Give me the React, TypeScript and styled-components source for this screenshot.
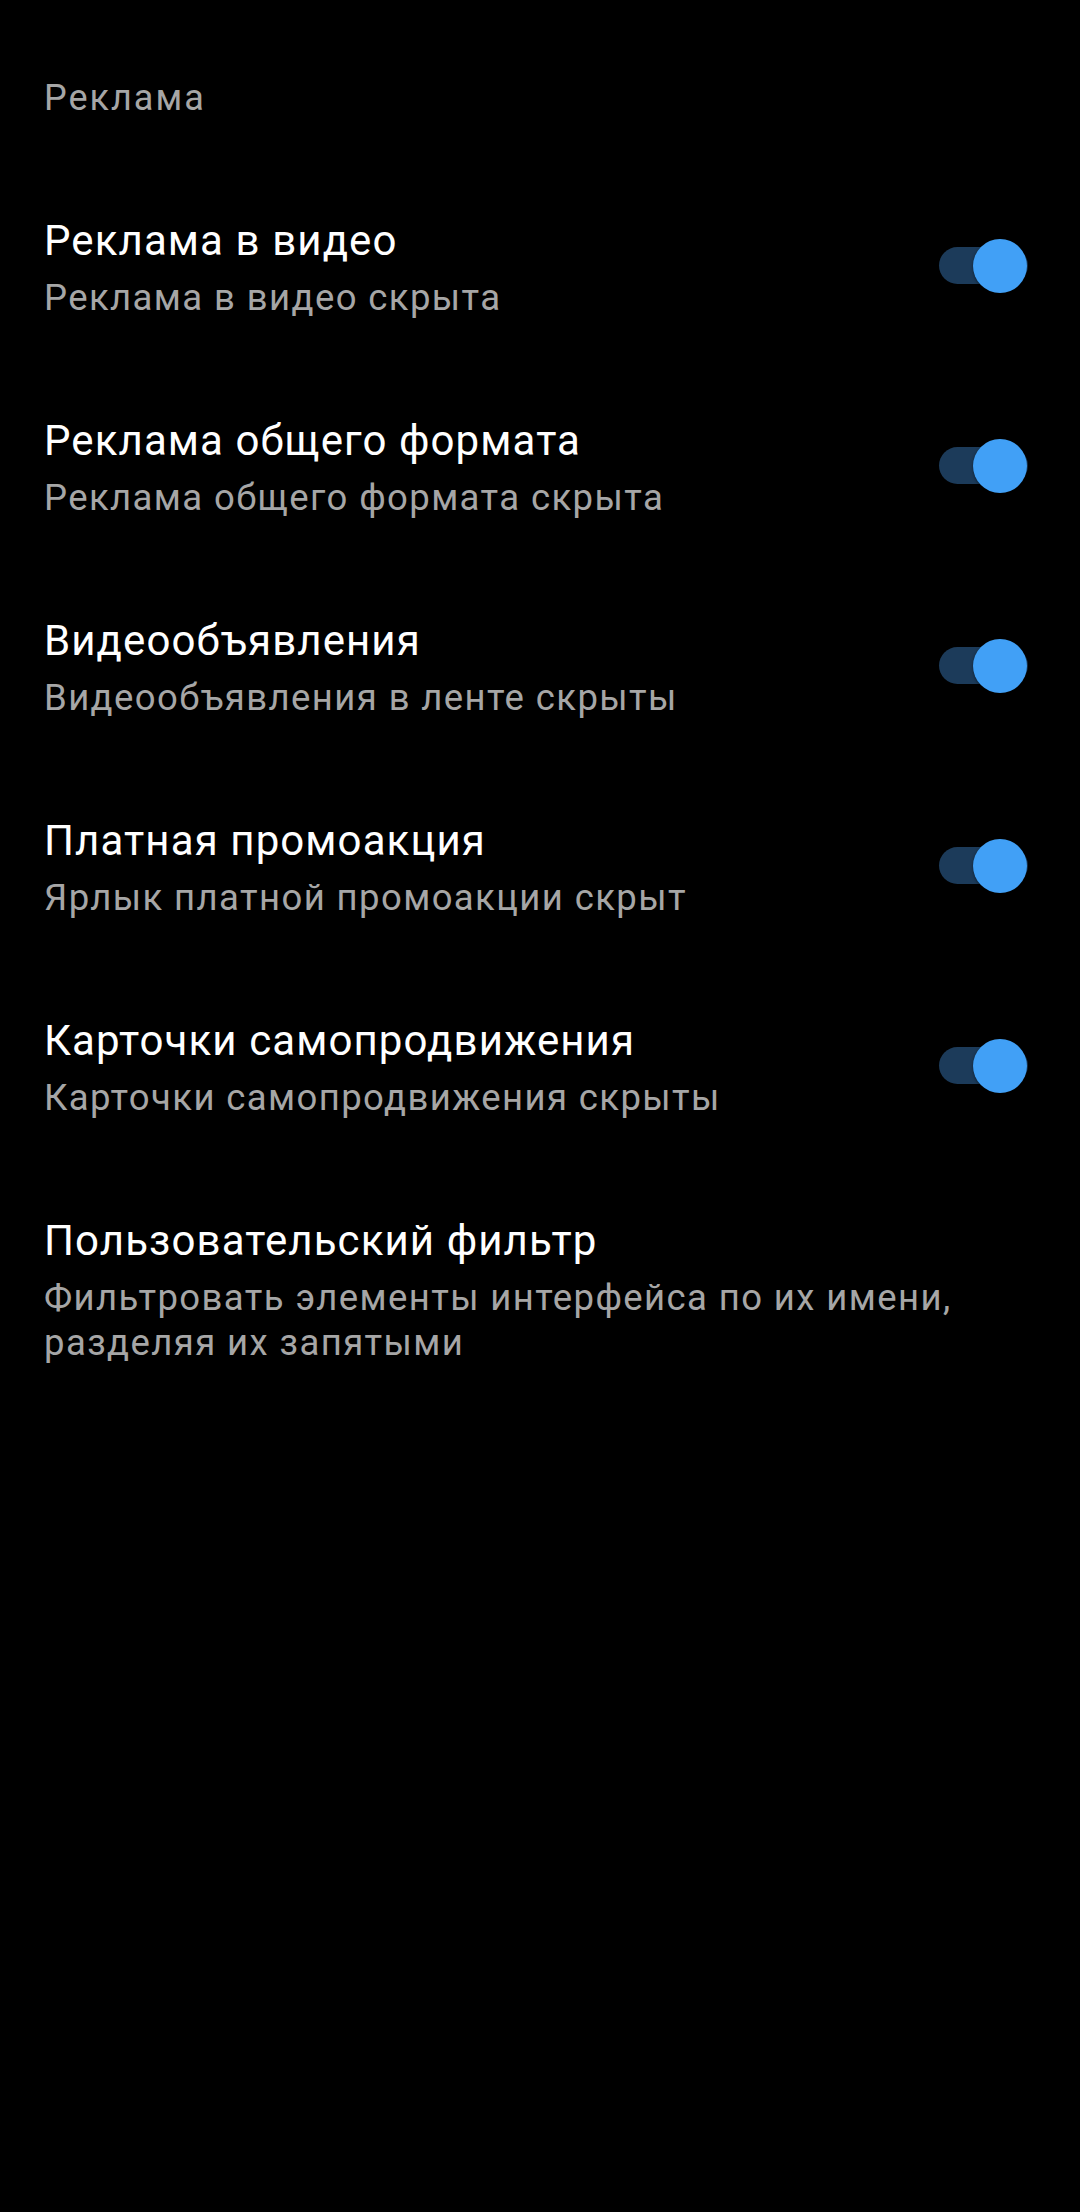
import React from 'react';
import styled, {createGlobalStyle} from "styled-components";

type itemType = {
    title: string
    description: string
    checked?: boolean
}

const items: itemType[] = [
    {title: 'Реклама в видео', description: 'Реклама в видео скрыта', checked: true},
    {title: 'Реклама общего формата', description: 'Реклама общего формата скрыта', checked: true},
    {title: 'Видеообъявления', description: 'Видеообъявления в ленте скрыты', checked: true},
    {title: 'Платная промоакция', description: 'Ярлык платной промоакции скрыт', checked: true},
    {title: 'Карточки самопродвижения', description: 'Карточки самопродвижения скрыты', checked: true},
    {title: 'Пользовательский фильтр', description: 'Фильтровать элементы интерфейса по их имени, разделяя их запятыми'},
]

const PrefItem = (props: itemType) => {
    return (
        <Row>
            <TextBlock>
                <Title>{props.title}</Title>
                <Summary>{props.description}</Summary>
            </TextBlock>
            {props.checked !== undefined && (
                <Switch>
                    <Thumb/>
                </Switch>
            )}
        </Row>
    )
}

export default function App() {
    return (
        <>
            <GlobalStyle/>
            <Screen>
                <Category>Реклама</Category>
                {items.map((item) => (
                    <PrefItem key={item.title} {...item}/>
                ))}
            </Screen>
        </>
    )
}

const GlobalStyle = createGlobalStyle`
    html, body {
        margin: 0;
        padding: 0;
        background: #000;
    }
    body {
        font-family: Roboto, "Noto Sans", sans-serif;
        -webkit-font-smoothing: antialiased;
    }
`

const Screen = styled.div`
    min-height: 2212px;
    background: #000;
    padding-top: 77px;
    box-sizing: border-box;
`

const Category = styled.div`
    padding: 0 44px;
    margin-bottom: 47px;
    font-size: 36px;
    line-height: 43px;
    font-weight: 400;
    letter-spacing: 2px;
    color: #a6a6a6;
`

const Row = styled.div`
    display: flex;
    align-items: center;
    padding: 48px 52px 47px 44px;
`

const TextBlock = styled.div`
    flex: 1;
    min-width: 0;
`

const Title = styled.div`
    font-size: 42px;
    line-height: 52px;
    font-weight: 400;
    letter-spacing: 1.1px;
    color: #ffffff;
`

const Summary = styled.div`
    margin-top: 8px;
    font-size: 36.5px;
    line-height: 45px;
    font-weight: 400;
    letter-spacing: 1.4px;
    color: #a6a6a6;
`

const Switch = styled.div`
    position: relative;
    flex-shrink: 0;
    width: 89px;
    height: 37px;
    margin-left: 24px;
    margin-bottom: 4px;
    border-radius: 19px;
    background: #1c3b5a;
`

const Thumb = styled.div`
    position: absolute;
    top: 50%;
    right: 1px;
    width: 54px;
    height: 54px;
    margin-top: -27px;
    border-radius: 50%;
    background: #41a0f6;
    box-shadow: 0 1px 3px rgba(0, 0, 0, 0.5);
`
